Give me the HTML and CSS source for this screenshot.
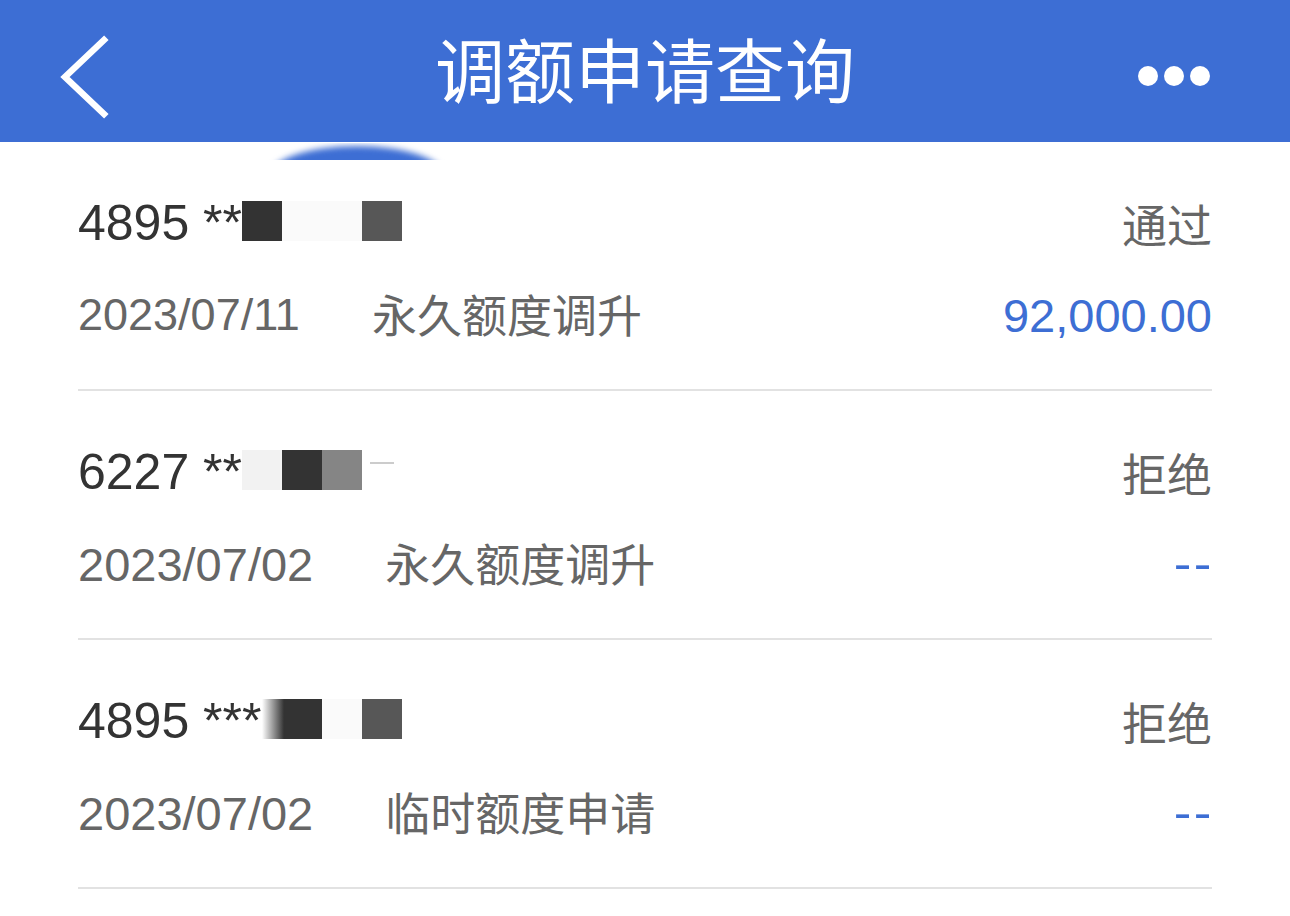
FILE: index.html
```html
<!DOCTYPE html>
<html lang="zh">
<head>
<meta charset="utf-8">
<title>调额申请查询</title>
<link rel="stylesheet" href="styles.css">
</head>
<body>
<div class="app">
  <header class="nav">
    <div class="nav-back">
      <svg width="60" height="100" viewBox="0 0 60 100"><polyline points="50,13 11,50 50,87" fill="none" stroke="#fff" stroke-width="6.5" stroke-linecap="square"/></svg>
    </div>
    <h1 class="nav-title">调额申请查询</h1>
    <div class="nav-more"><i></i><i></i><i></i></div>
  </header>
  <div class="blur-blob"></div>
  <main class="list">
    <section class="row">
      <div class="line top">
        <span class="card">4895 **<span class="mask"><b class="m dark"></b><b class="m faint w80"></b><b class="m grey5"></b></span></span>
        <span class="status">通过</span>
      </div>
      <div class="line bottom">
        <span class="date">2023/07/11</span>
        <span class="type">永久额度调升</span>
        <span class="amount">92,000.00</span>
      </div>
    </section>
    <section class="row">
      <div class="line top">
        <span class="card">6227 **<span class="mask"><b class="m faint2"></b><b class="m dark"></b><b class="m grey8"></b><b class="m tick"></b></span></span>
        <span class="status">拒绝</span>
      </div>
      <div class="line bottom">
        <span class="date wide">2023/07/02</span>
        <span class="type">永久额度调升</span>
        <span class="amount dash">--</span>
      </div>
    </section>
    <section class="row">
      <div class="line top">
        <span class="card">4895 ***<span class="mask"><b class="m dark soft w60"></b><b class="m faint"></b><b class="m grey5"></b></span></span>
        <span class="status">拒绝</span>
      </div>
      <div class="line bottom">
        <span class="date wide">2023/07/02</span>
        <span class="type">临时额度申请</span>
        <span class="amount dash">--</span>
      </div>
    </section>
  </main>
</div>
</body>
</html>
```

FILE: styles.css
```css
* { box-sizing: border-box; }
html, body { margin: 0; padding: 0; background: #fff; }
body {
  width: 1290px;
  height: 916px;
  overflow: hidden;
  font-family: "Liberation Sans", "Noto Sans CJK SC", sans-serif;
}
.app { position: relative; }

.nav {
  height: 142px;
  background: #3d6ed4;
  display: flex;
  align-items: center;
  justify-content: space-between;
  padding: 0 80px 0 54px;
  position: relative;
}
.nav-back { width: 60px; height: 100px; display: flex; margin-top: 12px; }
.nav-title {
  position: absolute;
  left: 0; right: 0;
  top: 0;
  margin: 0;
  text-align: center;
  line-height: 136px;
  font-family: "Noto Sans CJK SC", sans-serif;
  font-weight: 400;
  font-size: 70px;
  color: #fff;
  pointer-events: none;
}
.nav-more { display: flex; gap: 6px; margin-top: 10px; }
.nav-more i {
  display: block;
  width: 20px; height: 20px;
  border-radius: 50%;
  background: #fff;
}

.blur-blob {
  position: absolute;
  top: 143px;
  left: 262px;
  width: 190px;
  height: 17px;
  overflow: hidden;
}
.blur-blob::before {
  content: "";
  position: absolute;
  left: 8px;
  top: 3px;
  width: 174px;
  height: 60px;
  border-radius: 50%;
  background: #3d6ed4;
  filter: blur(3px);
}

.list { padding: 0 78px; }
.row {
  padding-top: 51px;
  padding-bottom: 44px;
  border-bottom: 2px solid #e2e2e2;
}
.line {
  display: flex;
  align-items: center;
  height: 60px;
}
.line.bottom { margin-top: 32px; }

.card {
  font-size: 50px;
  color: #333;
  display: flex;
  align-items: center;
  white-space: pre;
}
.mask { display: inline-flex; height: 40px; margin-top: -4px; }
.m { display: block; width: 40px; height: 40px; }
.m.dark { background: #333; }
.m.faint { background: #fafafa; }
.m.faint2 { background: #f2f2f2; }
.m.grey5 { background: #575757; }
.m.grey8 { background: #858585; }
.m.w80 { width: 80px; }
.m.w60 { width: 60px; }
.m.soft { background: linear-gradient(to right, rgba(51,51,51,0) 0, #333 22px); }
.m.tick { width: 24px; background: linear-gradient(to bottom, transparent 0, transparent 12px, #ccc 12px, #ccc 14px, transparent 14px); margin-left: 8px; }

.status {
  margin-left: auto;
  font-family: "Noto Sans CJK SC", sans-serif;
  font-size: 45px;
  color: #666;
}
.date { font-size: 45px; color: #666; }
.date.wide { font-size: 47px; }
.type {
  margin-left: 72px;
  margin-bottom: 4px;
  font-family: "Noto Sans CJK SC", sans-serif;
  font-size: 45px;
  color: #666;
}
.amount {
  margin-left: auto;
  font-size: 47px;
  color: #3d6ed4;
}
.amount.dash {
  font-size: 46px;
  letter-spacing: 2px;
  margin-right: -2px;
  transform: scaleX(1.15);
  transform-origin: right center;
}
```
